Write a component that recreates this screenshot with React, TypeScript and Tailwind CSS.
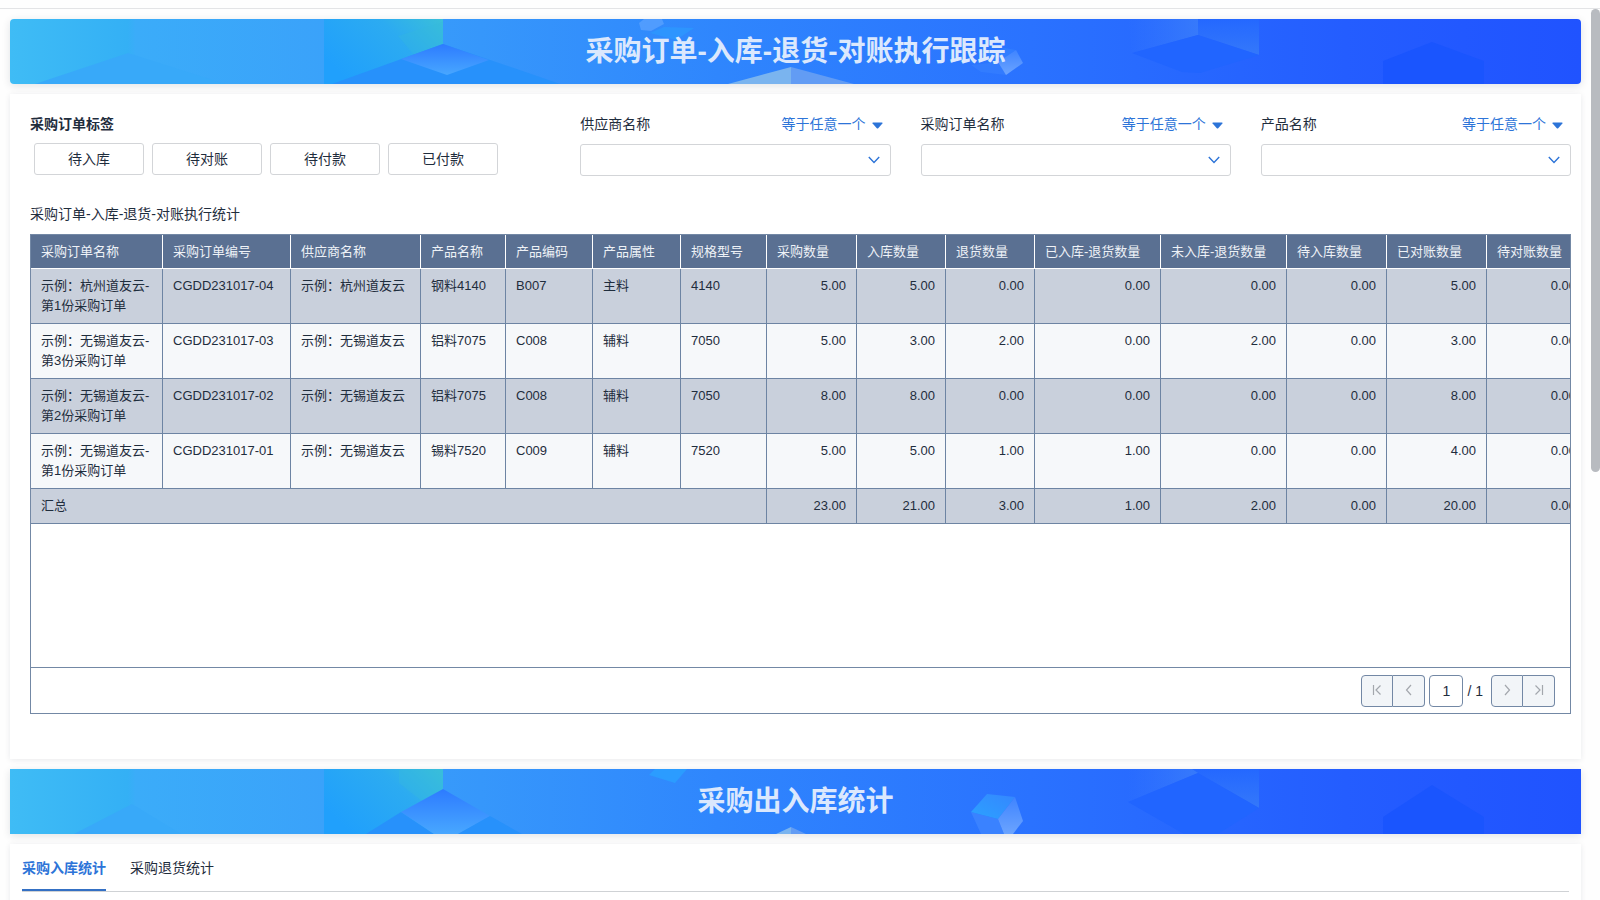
import type { ReactNode } from 'react';

const orderTags = ['待入库', '待对账', '待付款', '已付款'];

const filters = [
  { id: 'supplier', label: '供应商名称' },
  { id: 'order', label: '采购订单名称' },
  { id: 'product', label: '产品名称' },
];

const columns = [
  { label: '采购订单名称', width: 132 },
  { label: '采购订单编号', width: 128 },
  { label: '供应商名称', width: 130 },
  { label: '产品名称', width: 85 },
  { label: '产品编码', width: 87 },
  { label: '产品属性', width: 88 },
  { label: '规格型号', width: 86 },
  { label: '采购数量', width: 90 },
  { label: '入库数量', width: 89 },
  { label: '退货数量', width: 89 },
  { label: '已入库-退货数量', width: 126 },
  { label: '未入库-退货数量', width: 126 },
  { label: '待入库数量', width: 100 },
  { label: '已对账数量', width: 100 },
  { label: '待对账数量', width: 100 },
];

const rows = [
  {
    text: ['示例：杭州道友云-第1份采购订单', 'CGDD231017-04', '示例：杭州道友云', '钢料4140', 'B007', '主料', '4140'],
    values: ['5.00', '5.00', '0.00', '0.00', '0.00', '0.00', '5.00', '0.00'],
  },
  {
    text: ['示例：无锡道友云-第3份采购订单', 'CGDD231017-03', '示例：无锡道友云', '铝料7075', 'C008', '辅料', '7050'],
    values: ['5.00', '3.00', '2.00', '0.00', '2.00', '0.00', '3.00', '0.00'],
  },
  {
    text: ['示例：无锡道友云-第2份采购订单', 'CGDD231017-02', '示例：无锡道友云', '铝料7075', 'C008', '辅料', '7050'],
    values: ['8.00', '8.00', '0.00', '0.00', '0.00', '0.00', '8.00', '0.00'],
  },
  {
    text: ['示例：无锡道友云-第1份采购订单', 'CGDD231017-01', '示例：无锡道友云', '锡料7520', 'C009', '辅料', '7520'],
    values: ['5.00', '5.00', '1.00', '1.00', '0.00', '0.00', '4.00', '0.00'],
  },
];

const totals = ['23.00', '21.00', '3.00', '1.00', '2.00', '0.00', '20.00', '0.00'];

function BannerGradients({ id }: { id: string }) {
  return (
    <defs>
      <linearGradient id={`${id}-sky`} x1="0" x2="1" y1="0" y2="0">
        <stop offset="0" stopColor="#3fbcf5" />
        <stop offset="0.075" stopColor="#34b0f5" />
        <stop offset="0.08" stopColor="#3bacf9" />
        <stop offset="0.2" stopColor="#3aa2fa" />
        <stop offset="0.3" stopColor="#3697fb" />
        <stop offset="0.45" stopColor="#2f86fd" />
        <stop offset="0.65" stopColor="#2a72ff" />
        <stop offset="0.85" stopColor="#245dff" />
        <stop offset="1" stopColor="#2053ff" />
      </linearGradient>
      <linearGradient id={`${id}-teal`} x1="0" x2="1" y1="0.6" y2="0">
        <stop offset="0" stopColor="#20a0fc" />
        <stop offset="0.6" stopColor="#2cabf1" />
        <stop offset="1" stopColor="#3abfd9" />
      </linearGradient>
      <linearGradient id={`${id}-gem`} x1="0" x2="0" y1="0" y2="1">
        <stop offset="0" stopColor="#2d7bff" />
        <stop offset="1" stopColor="#48a7ff" />
      </linearGradient>
      <linearGradient id={`${id}-pane`} x1="0" x2="1" y1="0" y2="0">
        <stop offset="0" stopColor="#3a7dfb" stopOpacity="0" />
        <stop offset="1" stopColor="#3c80fa" />
      </linearGradient>
      <linearGradient id={`${id}-pane-right`} x1="0" x2="0" y1="0" y2="1">
        <stop offset="0" stopColor="#2468ff" />
        <stop offset="1" stopColor="#3478fa" />
      </linearGradient>
      <linearGradient id={`${id}-face`} x1="0" x2="0" y1="0" y2="1">
        <stop offset="0" stopColor="#3f84ff" />
        <stop offset="1" stopColor="#6ba4ff" />
      </linearGradient>
      <linearGradient id={`${id}-cap`} x1="0" x2="1" y1="1" y2="0">
        <stop offset="0" stopColor="#2ba2ff" />
        <stop offset="1" stopColor="#3586ff" />
      </linearGradient>
    </defs>
  );
}

function OrderArt() {
  return (
    <>
      <BannerGradients id="order" />
      <rect width="1571" height="65" fill="url(#order-sky)" />
      <polygon points="25,65 118,34 215,65" fill="#38a9f9" />
      <rect x="314" width="119" height="65" fill="url(#order-teal)" />
      <polygon points="388,17 433,3 433,25 404,36" fill="#35b9dc" opacity="0.3" />
      <polygon points="322,65 433,25 530,58 550,65" fill="#2791fb" />
      <polygon points="433,25 479,41 437,56 391,40" fill="url(#order-gem)" />
      <polygon points="629,4 634,0 652,0 654,5 641,12 631,11" fill="#6faeff" opacity="0.5" />
      <polygon points="640,14 654,8 684,9 666,21" fill="#2b9cff" opacity="0.6" />
      <polygon points="781,48 718,65 781,65" fill="#7ab4ef" />
      <polygon points="781,48 781,65 844,65" fill="#629cf4" />
      <polygon points="961,46 990,43 996,56 971,53" fill="#3f86ff" opacity="0.4" />
      <polygon points="968,35 995,29 1006,31 988,43" fill="#3b8cff" opacity="0.4" />
      <polygon points="1006,31 1013,44 996,56 988,43" fill="url(#order-face)" />
      <polygon points="1118,0 1188,0 1188,16 1122,34" fill="url(#order-pane)" opacity="0.75" />
      <polygon points="1188,0 1249,0 1249,36 1188,16" fill="url(#order-pane-right)" />
      <polygon points="1188,16 1249,36 1190,54 1172,53 1122,34" fill="#2165ff" />
      <polygon points="1422,23 1373,42 1373,65 1474,65 1474,42" fill="#1a55fe" />
    </>
  );
}

function StockArt() {
  return (
    <>
      <BannerGradients id="stock" />
      <rect width="1571" height="65" fill="url(#stock-sky)" />
      <polygon points="64,65 122,35 171,65" fill="#38a9f9" />
      <rect x="314" width="119" height="65" fill="url(#stock-teal)" />
      <polygon points="389,0 433,0 433,20 412,32 389,14" fill="#38bcdb" opacity="0.3" />
      <polygon points="356,65 391,43 424,65" fill="#2791fb" />
      <polygon points="391,43 433,20 480,47 448,65 424,65" fill="url(#stock-gem)" />
      <polygon points="448,65 480,47 512,65" fill="#2791fb" />
      <polygon points="639,6 645,0 677,0 665,14" fill="#2b9cff" />
      <polygon points="781,58 766,65 781,65" fill="#7ab4ef" />
      <polygon points="781,58 781,65 796,65" fill="#629cf4" />
      <polygon points="961,43 988,50 994,65 971,65" fill="#3a82ff" />
      <polygon points="961,43 977,25 1005,28 988,50" fill="url(#stock-cap)" />
      <polygon points="1005,28 1013,52 1003,65 994,65 988,50" fill="url(#stock-face)" />
      <polygon points="1118,0 1188,0 1188,4 1118,33" fill="url(#stock-pane)" opacity="0.75" />
      <polygon points="1182,0 1249,0 1249,39 1188,4" fill="url(#stock-pane-right)" />
      <polygon points="1118,33 1188,4 1249,39 1208,65 1174,65" fill="#2165ff" />
      <polygon points="1422,16 1373,48 1373,65 1474,65 1474,48" fill="#1a55fe" />
    </>
  );
}

function Banner({ title, rounded, children }: { title: string; rounded?: boolean; children: ReactNode }) {
  return (
    <header className={`relative flex h-[65px] shrink-0 items-center justify-center overflow-hidden shadow-[0_2px_8px_rgba(20,30,50,0.12)] ${rounded ? 'rounded' : ''}`}>
      <svg className="absolute inset-0 h-full w-full" viewBox="0 0 1571 65" preserveAspectRatio="none" aria-hidden="true">
        {children}
      </svg>
      <h1 className="relative text-[28px] leading-8 font-bold text-[#dbe8fd]">{title}</h1>
    </header>
  );
}

function FilterField({ id, label }: { id: string; label: string }) {
  return (
    <div>
      <div className="flex h-5 items-center justify-between pr-2">
        <label htmlFor={id}>{label}</label>
        <button type="button" className="flex items-center gap-1.5 text-[#2d74d8]">
          等于任意一个
          <svg className="mt-0.5 h-[7px] w-[11px]" viewBox="0 0 11 7" aria-hidden="true">
            <path d="M1 0.5h9q0.8 0.2 0.4 1L6.2 6.3q-0.7 0.6-1.4 0L0.6 1.5Q0.2 0.7 1 0.5z" fill="#2d74d8" />
          </svg>
        </button>
      </div>
      <div className="relative mt-2.5">
        <select id={id} className="block h-8 w-full appearance-none rounded-[3px] border border-[#d3d5d8] bg-white px-3">
          <option value="" />
        </select>
        <svg className="pointer-events-none absolute top-3 right-[11px] h-2 w-3" viewBox="0 0 12 8" fill="none" stroke="#2d74d8" strokeWidth="1.4" aria-hidden="true">
          <path d="M0.8 1L6 6.4L11.2 1" />
        </svg>
      </div>
    </div>
  );
}

function PageButton({ label, path, className }: { label: string; path: string; className: string }) {
  return (
    <button type="button" aria-label={label} className={`flex h-8 w-8 items-center justify-center border-[#7388a5] bg-[#f2f5f8] pb-0.5 ${className}`}>
      <svg className="h-3 w-3" viewBox="0 0 12 12" fill="none" stroke="#a3a7ad" strokeWidth="1.2" aria-hidden="true">
        <path d={path} />
      </svg>
    </button>
  );
}

function OrderTable() {
  return (
    <div className="flex h-[480px] flex-col border border-[#7388a5]">
      <div className="flex-1 overflow-hidden">
        <table className="w-[1556px] table-fixed border-separate border-spacing-0 text-[13px] leading-5">
          <colgroup>
            {columns.map((column) => <col key={column.label} style={{ width: column.width }} />)}
          </colgroup>
          <thead>
            <tr className="h-[34px] bg-[#5a7092] text-left text-[#eef2f7]">
              {columns.map((column) => (
                <th className="border-r border-b border-white px-2.5 font-normal whitespace-nowrap" key={column.label}>{column.label}</th>
              ))}
            </tr>
          </thead>
          <tbody>
            {rows.map((row) => (
              <tr className="h-[55px] align-top odd:bg-[#c9d0dc] even:bg-[#f6f8fa]" key={row.text[1]}>
                {row.text.map((cell, i) => (
                  <td className="border-r border-b border-[#6d84a3] px-2.5 py-[7px]" key={i}>{cell}</td>
                ))}
                {row.values.map((cell, i) => (
                  <td className="border-r border-b border-[#6d84a3] px-2.5 py-[7px] text-right" key={i}>{cell}</td>
                ))}
              </tr>
            ))}
          </tbody>
          <tfoot>
            <tr className="h-[35px] bg-[#c9d0dc]">
              <td className="border-r border-b border-[#6d84a3] px-2.5 py-[7px]" colSpan={7}>汇总</td>
              {totals.map((cell, i) => (
                <td className="border-r border-b border-[#6d84a3] px-2.5 py-[7px] text-right" key={i}>{cell}</td>
              ))}
            </tr>
          </tfoot>
        </table>
      </div>
      <nav className="flex h-[46px] items-center justify-end border-t border-[#7388a5] pr-[15px]" aria-label="分页">
        <PageButton label="首页" path="M2.5 1v10M9.5 1.5L5 6L9.5 10.5" className="rounded-l border" />
        <PageButton label="上一页" path="M8 1L3.5 6L8 11" className="rounded-r border-y border-r" />
        <input aria-label="页码" defaultValue="1" className="mx-1 h-8 w-[34px] rounded border border-[#7388a5] bg-white text-center" />
        <span className="mr-2">/ 1</span>
        <PageButton label="下一页" path="M4 1L8.5 6L4 11" className="rounded-l border" />
        <PageButton label="末页" path="M9.5 1v10M2.5 1.5L7 6L2.5 10.5" className="rounded-r border-y border-r" />
      </nav>
    </div>
  );
}

export default function App() {
  return (
    <div className="flex h-screen flex-col overflow-hidden bg-[#fefefe] pt-2 font-['Liberation_Sans','Noto_Sans_CJK_SC',sans-serif] text-sm leading-5 text-[#1f2d3d]" lang="zh-CN">
      <div className="flex min-h-0 flex-1 border-t border-[#e3e4e6]">
        <main className="flex min-w-0 flex-1 flex-col gap-2.5 p-2.5">
          <Banner title="采购订单-入库-退货-对账执行跟踪" rounded>
            <OrderArt />
          </Banner>

          <section className="shrink-0 bg-white pt-5 pr-2.5 pb-[45px] pl-5 shadow-[0_1px_6px_rgba(20,30,50,0.09)]">
            <div className="grid grid-cols-[520fr_310fr_310fr_310fr] gap-x-[30px]">
              <div>
                <h2 className="font-bold">采购订单标签</h2>
                <div className="mt-[9px] flex gap-2 pl-1">
                  {orderTags.map((tag) => (
                    <button type="button" className="h-8 w-[110px] rounded-[3px] border border-[#d3d5d8] bg-white" key={tag}>{tag}</button>
                  ))}
                </div>
              </div>
              {filters.map((filter) => <FilterField id={filter.id} label={filter.label} key={filter.id} />)}
            </div>
            <h2 className="mt-7 mb-2.5">采购订单-入库-退货-对账执行统计</h2>
            <OrderTable />
          </section>

          <Banner title="采购出入库统计">
            <StockArt />
          </Banner>

          <section className="min-h-40 shrink-0 bg-white px-3 shadow-[0_1px_6px_rgba(20,30,50,0.09)]">
            <div className="flex h-12 gap-6 border-b border-[#cfd2d5]" role="tablist">
              <button type="button" role="tab" aria-selected="true" className="border-b-2 border-[#3470c4] pt-0.5 font-bold text-[#2d74d8]">采购入库统计</button>
              <button type="button" role="tab" aria-selected="false" className="border-b-2 border-transparent pt-0.5">采购退货统计</button>
            </div>
          </section>
        </main>
        <div className="h-[463px] w-[9px] rounded-full bg-[#b8bbc0]" />
      </div>
    </div>
  );
}
